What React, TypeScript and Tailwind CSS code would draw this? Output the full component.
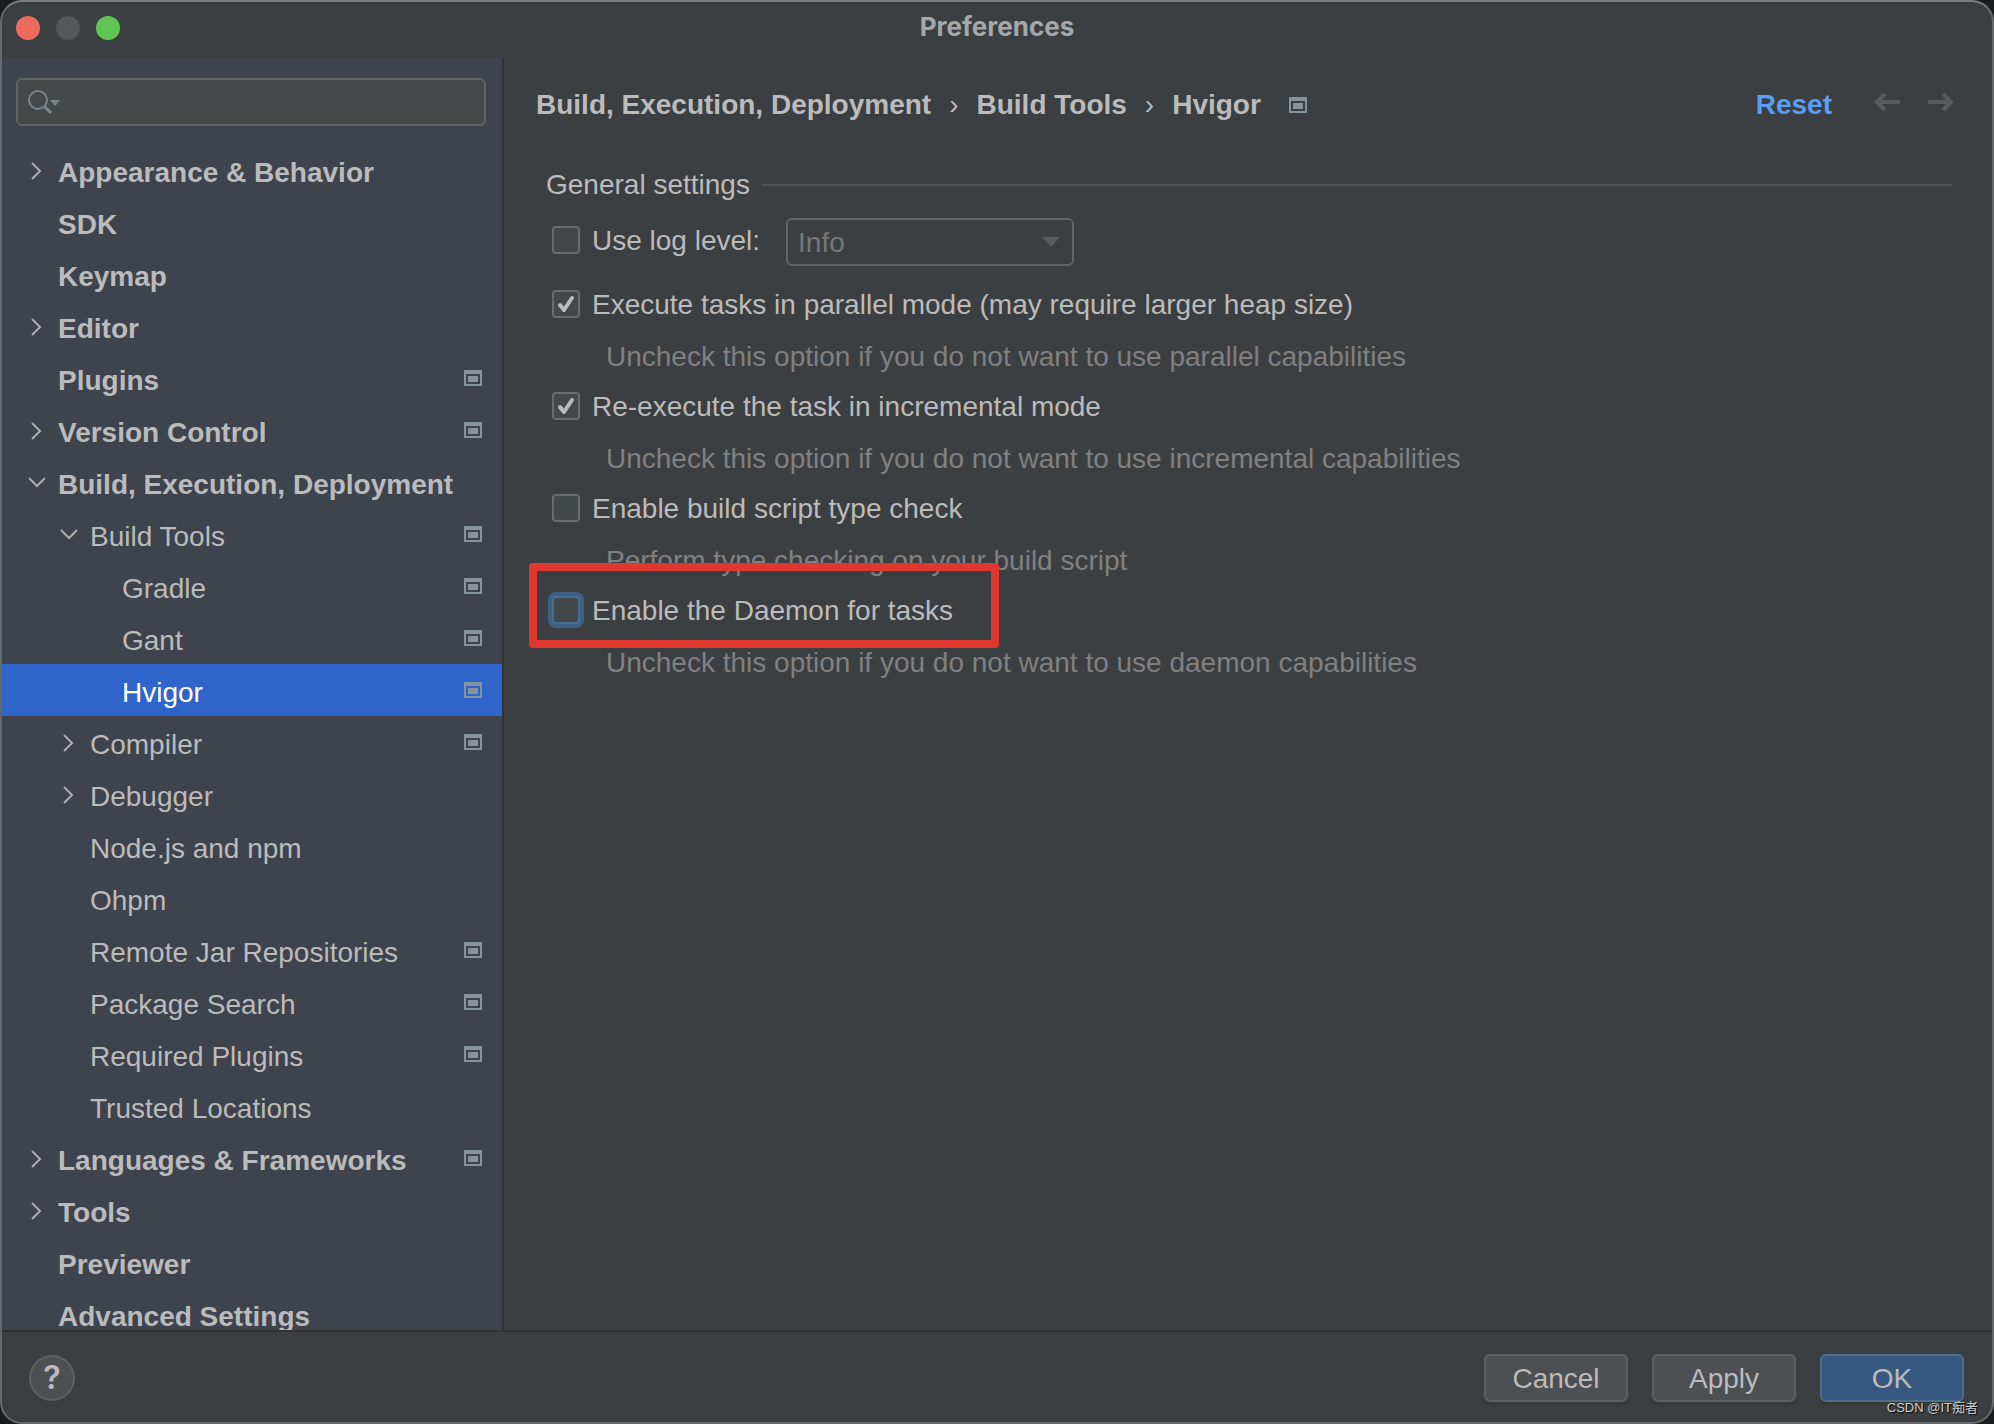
import clsx from "clsx";

type TreeItem = {
  label: string;
  level: number;
  arrow?: "right" | "down";
  project?: boolean;
  selected?: boolean;
};

const treeItems: TreeItem[] = [
  { label: "Appearance & Behavior", level: 0, arrow: "right" },
  { label: "SDK", level: 0 },
  { label: "Keymap", level: 0 },
  { label: "Editor", level: 0, arrow: "right" },
  { label: "Plugins", level: 0, project: true },
  { label: "Version Control", level: 0, arrow: "right", project: true },
  { label: "Build, Execution, Deployment", level: 0, arrow: "down" },
  { label: "Build Tools", level: 1, arrow: "down", project: true },
  { label: "Gradle", level: 2, project: true },
  { label: "Gant", level: 2, project: true },
  { label: "Hvigor", level: 2, project: true, selected: true },
  { label: "Compiler", level: 1, arrow: "right", project: true },
  { label: "Debugger", level: 1, arrow: "right" },
  { label: "Node.js and npm", level: 1 },
  { label: "Ohpm", level: 1 },
  { label: "Remote Jar Repositories", level: 1, project: true },
  { label: "Package Search", level: 1, project: true },
  { label: "Required Plugins", level: 1, project: true },
  { label: "Trusted Locations", level: 1 },
  { label: "Languages & Frameworks", level: 0, arrow: "right", project: true },
  { label: "Tools", level: 0, arrow: "right" },
  { label: "Previewer", level: 0 },
  { label: "Advanced Settings", level: 0 },
];

const indents = ["pl-6", "pl-14", "pl-[88px]"];

function ProjectIcon({ className }: { className?: string }) {
  return (
    <svg
      className={clsx("h-4 w-[18px] shrink-0 text-[#87939A]", className)}
      viewBox="0 0 18 16"
      fill="currentColor"
      aria-hidden="true"
    >
      <path fillRule="evenodd" d="M0 0h18v16H0zM2 4v10h14V4z" />
      <path d="M4 6h10v6H4z" />
    </svg>
  );
}

function TreeArrow({ direction }: { direction?: "right" | "down" }) {
  return (
    <svg
      className="size-6 shrink-0"
      viewBox="0 0 24 24"
      fill="none"
      stroke="#ADADAD"
      strokeWidth="2"
      aria-hidden="true"
    >
      {direction === "right" && <path d="M6 5l8 8-8 8" />}
      {direction === "down" && <path d="M3 8l8 8 8-8" />}
    </svg>
  );
}

function TreeRow({ item }: { item: TreeItem }) {
  return (
    <li>
      <button
        type="button"
        className={clsx(
          "flex h-13 w-full items-center pr-5 text-left",
          indents[item.level],
          item.level === 0 && "font-bold",
          item.selected && "bg-[#2F65CA] text-white"
        )}
      >
        <TreeArrow direction={item.arrow} />
        <span className="ml-2 flex-1 pt-1.5 whitespace-nowrap">{item.label}</span>
        {item.project && <ProjectIcon />}
      </button>
    </li>
  );
}

function Sidebar() {
  return (
    <aside className="flex w-[502px] shrink-0 flex-col border-r-2 border-[#323232] bg-[#3F434D] pt-5">
      <div className="mr-4 ml-3.5 flex h-12 shrink-0 items-center rounded-md border-2 border-[#646464] bg-[#45494A] pl-2.5">
        <svg
          className="h-6 w-8 shrink-0"
          viewBox="0 0 32 24"
          fill="none"
          stroke="#7B868C"
          aria-hidden="true"
        >
          <circle cx="10" cy="10" r="9" strokeWidth="2" />
          <path d="M16 16l7 7" strokeWidth="3" />
          <path d="M22 10h10l-5 6z" fill="#7B868C" stroke="none" />
        </svg>
        <input
          type="text"
          aria-label="Search settings"
          className="min-w-0 flex-1 bg-transparent px-2 outline-none"
        />
      </div>
      <nav className="mt-4.5 min-h-0 flex-1 overflow-hidden">
        <ul>
          {treeItems.map((item) => (
            <TreeRow key={item.label} item={item} />
          ))}
        </ul>
      </nav>
    </aside>
  );
}

type CheckProps = {
  id: string;
  label: string;
  checked?: boolean;
  focused?: boolean;
};

function Check({ id, label, checked, focused }: CheckProps) {
  return (
    <div className="flex items-center">
      <span className="grid size-7 shrink-0">
        <input
          id={id}
          type="checkbox"
          defaultChecked={checked}
          className={clsx(
            "peer col-start-1 row-start-1 size-7 appearance-none rounded-sm border-2 bg-[#43494A]",
            focused
              ? "border-[#466D94] ring-4 ring-[#3D6185]"
              : "border-[#6B6B6B]"
          )}
        />
        <svg
          className="pointer-events-none invisible col-start-1 row-start-1 size-7 peer-checked:visible"
          viewBox="0 0 28 28"
          fill="none"
          stroke="#BBBBBB"
          strokeWidth="4"
          strokeLinecap="round"
          strokeLinejoin="round"
          aria-hidden="true"
        >
          <path d="M8 15l4 5 8-12" />
        </svg>
      </span>
      <label htmlFor={id} className="ml-3 pt-0.5 whitespace-nowrap">
        {label}
      </label>
    </div>
  );
}

function Option({ hint, ...check }: CheckProps & { hint: string }) {
  return (
    <div className="mb-2.5">
      <div className="flex h-10 items-center">
        <Check {...check} />
      </div>
      <p className="flex h-13 items-center pt-3.5 pl-[54px] whitespace-nowrap text-[#808080]">
        {hint}
      </p>
    </div>
  );
}

function Content() {
  return (
    <main className="min-w-0 flex-1 pr-[38px] pl-8">
      <div className="flex h-[88px] items-center font-bold">
        <nav className="flex items-center gap-[18px] pt-1.5 whitespace-nowrap">
          <a href="#build">Build, Execution, Deployment</a>
          <span className="font-normal">›</span>
          <a href="#tools">Build Tools</a>
          <span className="font-normal">›</span>
          <a href="#hvigor">Hvigor</a>
          <ProjectIcon className="ml-2.5" />
        </nav>
        <button type="button" className="ml-auto pt-1.5 text-[#589DF6]">
          Reset
        </button>
        <div className="ml-[42px] flex gap-7">
          <button type="button" aria-label="Back">
            <svg className="h-5 w-[26px]" viewBox="0 0 26 20" fill="none" stroke="#5A5A5A" strokeWidth="4">
              <path d="M26 10H3M11 2l-8 8 8 8" />
            </svg>
          </button>
          <button type="button" aria-label="Forward">
            <svg className="h-5 w-[26px]" viewBox="0 0 26 20" fill="none" stroke="#5A5A5A" strokeWidth="4">
              <path d="M0 10h23M15 2l8 8-8 8" />
            </svg>
          </button>
        </div>
      </div>

      <section className="pr-0.5 pl-2.5">
        <h2 className="flex h-18 items-center gap-3 pt-1.5">
          General settings
          <span className="h-0.5 flex-1 bg-[#515151]" />
        </h2>
        <div className="pl-1.5">
          <div className="flex h-12 items-start">
            <div className="flex h-11 items-center">
              <Check id="log" label="Use log level:" />
            </div>
            <div className="ml-[26px] grid w-72">
              <select
                disabled
                aria-label="Log level"
                className="col-start-1 row-start-1 h-12 appearance-none rounded-md border-2 border-[#646464] bg-transparent pt-0.5 pl-2.5 text-[#777777]"
              >
                <option>Info</option>
              </select>
              <svg
                className="pointer-events-none col-start-1 row-start-1 mr-3.5 h-2.5 w-[18px] place-self-center justify-self-end"
                viewBox="0 0 18 10"
                fill="#5A5D5F"
                aria-hidden="true"
              >
                <path d="M0 0h18l-9 10z" />
              </svg>
            </div>
          </div>
          <div className="mt-4.5">
            <Option
              id="parallel"
              label="Execute tasks in parallel mode (may require larger heap size)"
              hint="Uncheck this option if you do not want to use parallel capabilities"
              checked
            />
            <Option
              id="incremental"
              label="Re-execute the task in incremental mode"
              hint="Uncheck this option if you do not want to use incremental capabilities"
              checked
            />
            <Option
              id="typecheck"
              label="Enable build script type check"
              hint="Perform type checking on your build script"
            />
            <div className="relative">
              <Option
                id="daemon"
                label="Enable the Daemon for tasks"
                hint="Uncheck this option if you do not want to use daemon capabilities"
                focused
              />
              <div className="pointer-events-none absolute -top-[27px] -left-[23px] h-[85px] w-[470px] rounded-sm border-8 border-[#E0372E]" />
            </div>
          </div>
        </div>
      </section>
    </main>
  );
}

function DialogButton({ label, primary }: { label: string; primary?: boolean }) {
  return (
    <button
      type="button"
      className={clsx(
        "h-12 w-36 rounded-md border-2 pt-0.5 shadow-[0_3px_1px_#36393A]",
        primary ? "border-[#4C708C] bg-[#365880]" : "border-[#5E6060] bg-[#4C5052]"
      )}
    >
      {label}
    </button>
  );
}

export default function App() {
  return (
    <div className="h-screen bg-[#1B1C1D] font-['Liberation_Sans',Arial,sans-serif] text-[28px] leading-8 text-[#BBBBBB]">
      <div className="relative flex h-full flex-col overflow-hidden rounded-[22px] border-2 border-[#66696B] border-t-[#7C7F81] bg-[#3C3F41]">
        <header className="grid h-14 shrink-0 grid-cols-[1fr_auto_1fr] items-center px-3.5 pb-1">
          <div className="flex gap-4">
            <button type="button" aria-label="Close" className="size-6 rounded-full bg-[#ED6A5E]" />
            <button type="button" aria-label="Minimize" className="size-6 rounded-full bg-[#565859]" />
            <button type="button" aria-label="Zoom" className="size-6 rounded-full bg-[#61C554]" />
          </div>
          <h1 className="pb-0.5 font-[Inter,sans-serif] text-[26px] font-bold text-[#A6A7A8]">Preferences</h1>
        </header>

        <div className="flex min-h-0 flex-1">
          <Sidebar />
          <Content />
        </div>

        <footer className="flex h-23 shrink-0 items-center justify-between border-t-2 border-[#323232] pt-0.5 pr-7 pl-[27px]">
          <button
            type="button"
            aria-label="Help"
            className="size-[46px] rounded-full border-2 border-[#5E6060] bg-[#4C5052] font-[Inter,sans-serif] text-[32px] font-semibold"
          >
            ?
          </button>
          <div className="flex gap-6">
            <DialogButton label="Cancel" />
            <DialogButton label="Apply" />
            <DialogButton label="OK" primary />
          </div>
        </footer>
        <span className="absolute right-3.5 bottom-1 font-['Liberation_Sans','Noto_Sans_CJK_SC',sans-serif] text-[13px] leading-5 text-[#D0D0D0] [text-shadow:1px_1px_1px_#000]">
          CSDN @IT痴者
        </span>
      </div>
    </div>
  );
}
